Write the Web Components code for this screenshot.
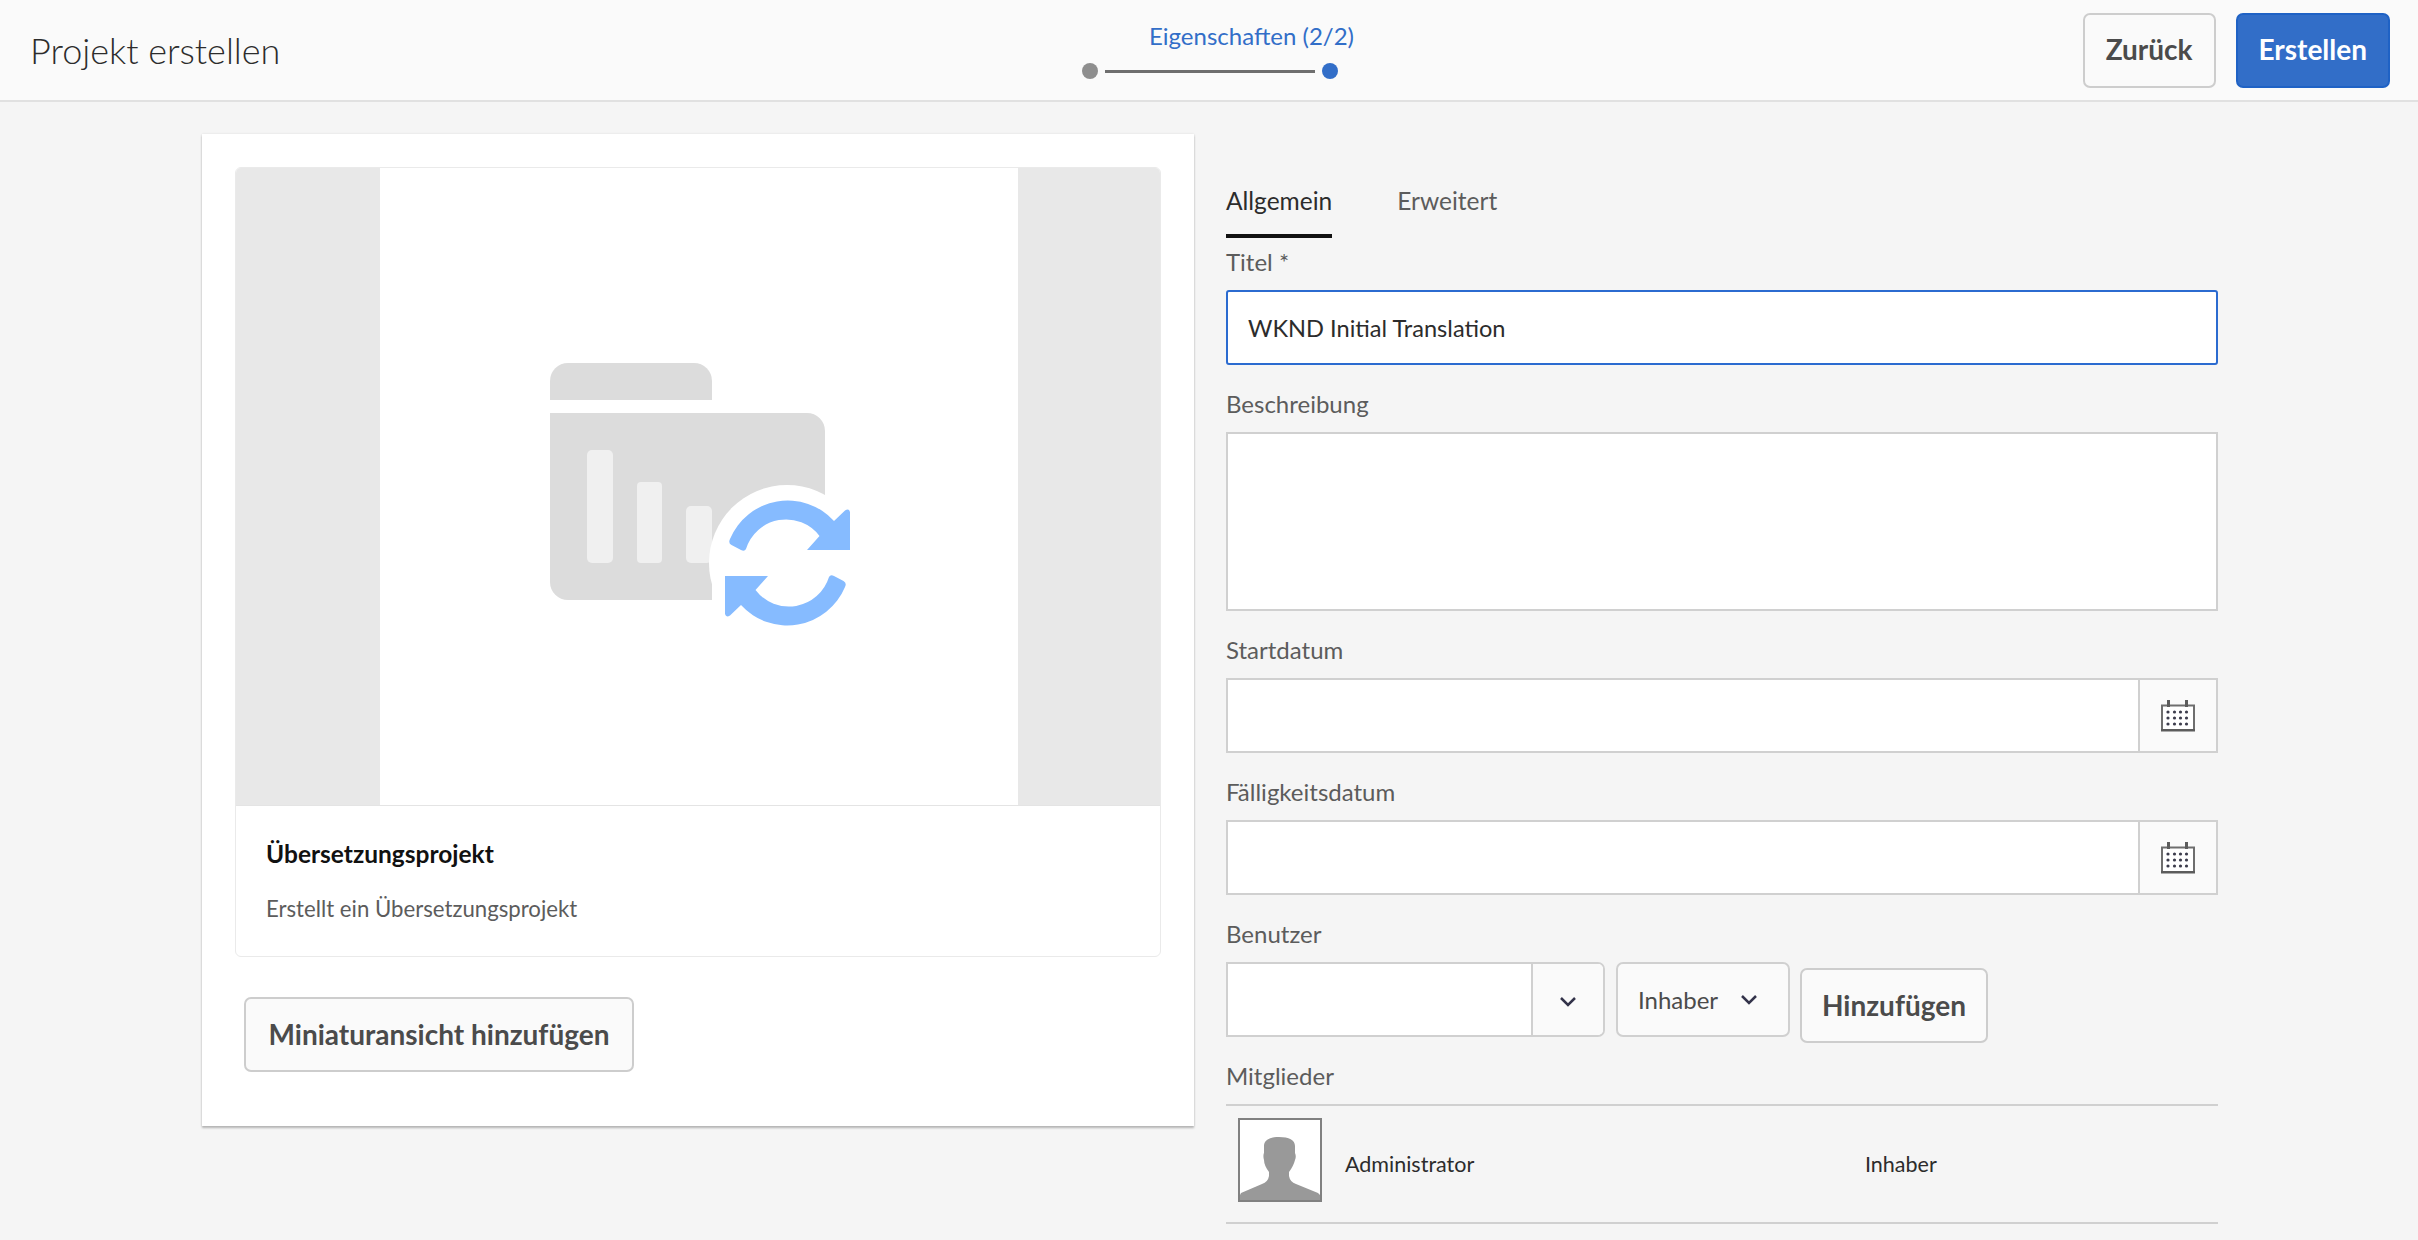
<!DOCTYPE html>
<html lang="de">
<head>
<meta charset="utf-8">
<title>Projekt erstellen</title>
<style>
  html, body { margin: 0; height: 100%; }
  body {
    background: #f5f5f5;
    color: #4b4b4b;
    font: 24px Lato, "Open Sans", sans-serif;
    overflow: hidden;
  }
  main { display: flex; gap: 32px; padding: 32px 0 0 202px; }
</style>
</head>
<body>
<template id="calendar-icon">
  <svg width="36" height="32" viewBox="0 0 36 32">
    <path d="M2 5.500h32v24.500H2z" fill="#fff" stroke="#6e6e6e" stroke-width="2"/>
    <path d="M1 29h34v2.500H1z" fill="#5c5c5c"/>
    <path d="M7 0h3v7H7zM25 0h3v7h-3z" fill="#5c5c5c"/>
    <g fill="#3c3c4c">
      <circle cx="8" cy="12" r="1.600"/><circle cx="14.500" cy="12" r="1.600"/><circle cx="20.500" cy="12" r="1.600"/><circle cx="26.500" cy="12" r="1.600"/>
      <circle cx="8" cy="18" r="1.600"/><circle cx="14.500" cy="18" r="1.600"/><circle cx="20.500" cy="18" r="1.600"/><circle cx="26.500" cy="18" r="1.600"/>
      <circle cx="8" cy="24" r="1.600"/><circle cx="14.500" cy="24" r="1.600"/><circle cx="20.500" cy="24" r="1.600"/><circle cx="26.500" cy="24" r="1.600"/>
    </g>
  </svg>
</template>

<app-header></app-header>
<main>
  <template-card></template-card>
  <project-form></project-form>
</main>

<script>
class AppButton extends HTMLElement {
  constructor () {
    super();
    this.attachShadow({ mode: "open" });
    this.shadowRoot.innerHTML = `
    <style>
      :host {
        display: inline-flex;
        align-items: center;
        justify-content: center;
        box-sizing: border-box;
        height: 75px;
        padding: 0 21px 2px;
        border: 2px solid #cdcdcd;
        border-radius: 7px;
        background: #fafafa;
        color: #4b4b4b;
        font: 700 28px Lato, "Open Sans", sans-serif;
      }
      :host([primary]) {
        border-color: #1f62c5;
        background: #326ec8;
        color: #fff;
      }
    </style>
    <slot></slot>`;
  }
}

class AppHeader extends HTMLElement {
  constructor () {
    super();
    this.attachShadow({ mode: "open" });
    this.shadowRoot.innerHTML = `
    <style>
      :host {
        display: flex;
        align-items: center;
        box-sizing: border-box;
        height: 102px;
        padding: 0 28px 0 30px;
        background: #fafafa;
        border-bottom: 2px solid #e1e1e1;
      }
      h1 {
        width: 1052px;
        margin: 0;
        font: 300 36px Lato, "Open Sans", sans-serif;
        color: #2c2c2c;
      }
      .wizard { display: flex; flex-direction: column; align-items: flex-end; width: 272px; }
      .step { font-size: 24px; line-height: 30px; color: #326ec8; }
      .track { display: flex; align-items: center; gap: 7px; width: 256px; margin: 12px 16px 0 0; }
      .dot { width: 16px; height: 16px; border-radius: 50%; background: #8e8e8e; }
      .dot.on { background: #326ec8; }
      .line { flex: 1; height: 3px; background: #6e6e6e; }
      .actions { display: flex; gap: 20px; margin-left: auto; }
    </style>
    <h1>Projekt erstellen</h1>
    <div class="wizard">
      <div class="step">Eigenschaften (2/2)</div>
      <div class="track"><span class="dot"></span><span class="line"></span><span class="dot on"></span></div>
    </div>
    <div class="actions">
      <app-button>Zurück</app-button>
      <app-button primary>Erstellen</app-button>
    </div>`;
  }
}

class TemplateCard extends HTMLElement {
  constructor () {
    super();
    this.attachShadow({ mode: "open" });
    this.shadowRoot.innerHTML = `
    <style>
      :host {
        display: block;
        box-sizing: border-box;
        width: 992px;
        height: 992px;
        padding: 33px;
        background: #fff;
        box-shadow: 0 2px 2px #b4b4b4, 0 0 2px #dedede;
      }
      .thumb { border: 1px solid #eaeaea; border-radius: 6px; overflow: hidden; }
      .image { display: flex; justify-content: center; height: 637px; background: #e8e8e8; border-bottom: 1px solid #e4e4e4; }
      .page { display: flex; align-items: center; justify-content: center; width: 638px; margin-left: 2px; background: #fff; }
      .page svg { margin: 6px 0 0 2px; }
      .caption { height: 150px; box-sizing: border-box; padding: 33px 30px 0; }
      .name { font-weight: 700; font-size: 24.500px; line-height: 30px; color: #111; }
      .desc { font-size: 22.200px; line-height: 30px; margin-top: 25px; color: #5c5c5c; }
      app-button { width: 390px; margin: 40px 0 0 9px; padding: 0 0 2px; }
    </style>
    <div class="thumb">
      <div class="image">
        <div class="page">
          <svg width="400" height="320" viewBox="0 0 400 320">
            <path d="M50 70V51a18 18 0 0 1 18-18h126a18 18 0 0 1 18 18v19z" fill="#dcdcdc"/>
            <path d="M50 83H307a18 18 0 0 1 18 18V240H212V270H68a18 18 0 0 1-18-18z" fill="#dcdcdc"/>
            <rect x="87" y="120" width="26" height="113" rx="5" fill="#f0f0f0"/>
            <rect x="137" y="152" width="25" height="81" rx="4" fill="#f0f0f0"/>
            <rect x="186" y="176" width="26" height="57" rx="5" fill="#f0f0f0"/>
            <circle cx="287" cy="233" r="78" fill="#fff"/>
            <path d="M230 209A62.500 62.500 0 0 1 334 191L345 180.500Q349 178 350 182V220H307L319.500 206A42 42 0 0 0 246 219Q244.500 222 241 220L231.500 215Q228 213 230 209z" fill="#86bbff"/>
            <path d="M230 209A62.500 62.500 0 0 1 334 191L345 180.500Q349 178 350 182V220H307L319.500 206A42 42 0 0 0 246 219Q244.500 222 241 220L231.500 215Q228 213 230 209z" fill="#86bbff" transform="rotate(180 287.500 233)"/>
          </svg>
        </div>
      </div>
      <div class="caption">
        <div class="name">Übersetzungsprojekt</div>
        <div class="desc">Erstellt ein Übersetzungsprojekt</div>
      </div>
    </div>
    <app-button>Miniaturansicht hinzufügen</app-button>`;
  }
}

class FormField extends HTMLElement {
  constructor () {
    super();
    this.attachShadow({ mode: "open" });
    this.shadowRoot.innerHTML = `
    <style>
      :host { display: block; }
      label { display: flex; align-items: center; box-sizing: border-box; height: 54px; padding-bottom: 3px; font-size: 24px; color: #5c5c5c; }
    </style>
    <label>${this.getAttribute('label') || ''}</label>
    <slot></slot>`;
  }
}

class TextBox extends HTMLElement {
  constructor () {
    super();
    this.attachShadow({ mode: "open" });
    this.shadowRoot.innerHTML = `
    <style>
      :host {
        display: flex;
        align-items: center;
        box-sizing: border-box;
        height: 75px;
        padding: 0 20px;
        background: #fff;
        border: 2px solid #d0d0d0;
        color: #2c2c2c;
        font-size: 23.600px;
      }
      :host([focused]) { border-color: #2b6bd0; border-radius: 3px; }
      :host([tall]) { height: 179px; }
    </style>
    <slot></slot>`;
  }
}

class DateField extends HTMLElement {
  constructor () {
    super();
    this.attachShadow({ mode: "open" });
    this.shadowRoot.innerHTML = `
    <style>
      :host { display: flex; box-sizing: border-box; height: 75px; border: 2px solid #d0d0d0; background: #fff; }
      .input { flex: 1; }
      .btn { display: flex; align-items: center; justify-content: center; width: 76px; background: #fafafa; border-left: 2px solid #d0d0d0; }
    </style>
    <div class="input"></div>
    <div class="btn"></div>`;
    this.shadowRoot.querySelector('.btn').append(document.getElementById('calendar-icon').content.cloneNode(true));
  }
}

class UserPicker extends HTMLElement {
  constructor () {
    super();
    this.attachShadow({ mode: "open" });
    const chevron = `<svg width="18" height="11" viewBox="0 0 18 11"><path d="M2 2l7 7 7-7" fill="none" stroke="#33334a" stroke-width="2.500"/></svg>`;
    this.shadowRoot.innerHTML = `
    <style>
      :host { display: flex; gap: 11px; height: 75px; align-items: flex-start; }
      .combo { display: flex; box-sizing: border-box; width: 379px; height: 75px; border: 2px solid #d0d0d0; border-radius: 0 7px 7px 0; background: #fff; overflow: hidden; }
      .combo .input { flex: 1; }
      .combo .toggle { display: flex; align-items: center; justify-content: center; width: 72px; padding-top: 4px; box-sizing: border-box; background: #fafafa; border-left: 2px solid #d0d0d0; }
      .select { display: flex; align-items: center; justify-content: space-between; box-sizing: border-box; width: 174px; height: 75px; padding: 0 30px 0 20px; border: 2px solid #d0d0d0; border-radius: 7px; background: #fafafa; font-size: 24px; }
      app-button { margin: 6px 0 0 -1px; width: 188px; padding: 0 0 2px; }
    </style>
    <div class="combo"><div class="input"></div><div class="toggle">${chevron}</div></div>
    <div class="select"><span>Inhaber</span>${chevron}</div>
    <app-button>Hinzufügen</app-button>`;
  }
}

class MemberRow extends HTMLElement {
  constructor () {
    super();
    this.attachShadow({ mode: "open" });
    this.shadowRoot.innerHTML = `
    <style>
      :host {
        display: flex;
        align-items: center;
        box-sizing: border-box;
        height: 120px;
        padding: 0 0 0 12px;
        border-top: 2px solid #d0d0d0;
        border-bottom: 2px solid #d0d0d0;
        font-size: 21.500px;
        color: #2c2c2c;
      }
      .avatar { display: block; flex: none; box-sizing: border-box; width: 84px; height: 84px; margin-bottom: 8px; border: 2px solid #808080; background: #fff; }
      .name { width: 520px; margin-left: 23px; }
    </style>
    <svg class="avatar" viewBox="0 0 80 80">
      <path d="M1 73L22 64Q28 62 29 56V52C26 48 24 44 24 40C23 37 23.500 34 24 33V26C24 20 30 17 39 17C49 17 55 20 55 26V33C56 35 56 38 55 40C54 44 52 48 49 52V56Q50 62 56 64L78 73L80 75V80H0V75z" fill="#999"/>
    </svg>
    <span class="name"><slot name="name"></slot></span>
    <span><slot name="role"></slot></span>`;
  }
}

class ProjectForm extends HTMLElement {
  constructor () {
    super();
    this.attachShadow({ mode: "open" });
    this.shadowRoot.innerHTML = `
    <style>
      :host { display: flex; flex-direction: column; gap: 13px; width: 992px; padding-top: 32px; }
      .tabs { display: flex; gap: 65px; height: 70px; margin-bottom: -13px; }
      .tab { display: flex; align-items: center; height: 72px; box-sizing: border-box; border-bottom: 4px solid transparent; font-size: 24.500px; color: #5c5c5c; }
      .tab.on { color: #2c2c2c; border-bottom-color: #111; }
    </style>
    <div class="tabs"><span class="tab on">Allgemein</span><span class="tab">Erweitert</span></div>
    <form-field label="Titel *"><text-box focused>WKND Initial Translation</text-box></form-field>
    <form-field label="Beschreibung"><text-box tall></text-box></form-field>
    <form-field label="Startdatum"><date-field></date-field></form-field>
    <form-field label="Fälligkeitsdatum"><date-field></date-field></form-field>
    <form-field label="Benutzer"><user-picker></user-picker></form-field>
    <form-field label="Mitglieder">
      <member-row><span slot="name">Administrator</span><span slot="role">Inhaber</span></member-row>
    </form-field>`;
  }
}

customElements.define("app-button", AppButton);
customElements.define("app-header", AppHeader);
customElements.define("template-card", TemplateCard);
customElements.define("form-field", FormField);
customElements.define("text-box", TextBox);
customElements.define("date-field", DateField);
customElements.define("user-picker", UserPicker);
customElements.define("member-row", MemberRow);
customElements.define("project-form", ProjectForm);
</script>
</body>
</html>
